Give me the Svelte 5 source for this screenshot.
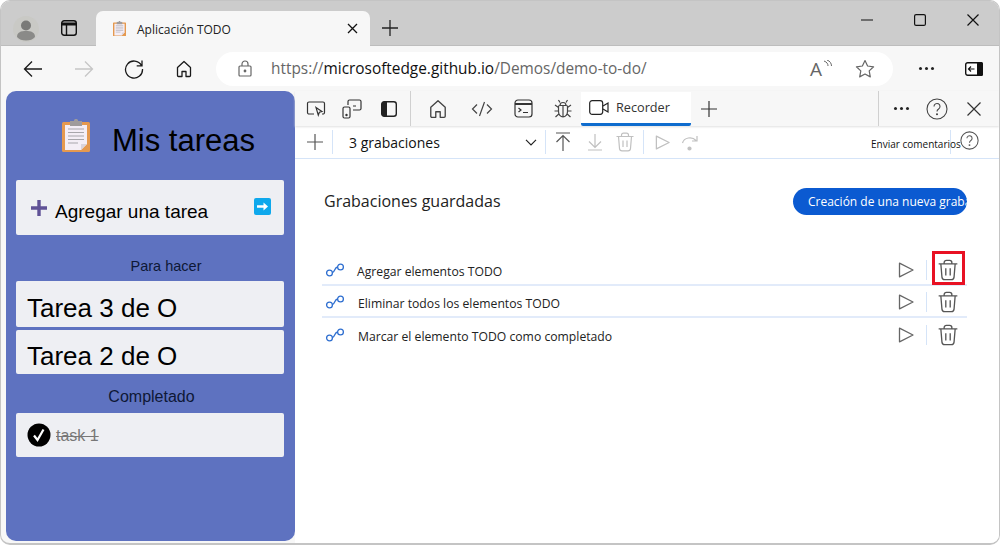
<script>
  let recordings = ["Agregar elementos TODO", "Eliminar todos los elementos TODO", "Marcar el elemento TODO como completado"];
</script>

{#snippet clipboard(w)}
  <svg width={w} viewBox="0 0 28 33" class="icon">
    <rect x="0" y="3" width="28" height="30" rx="1.5" fill="#e5994f"/>
    <path d="M3 6h22v19l-6 6H3z" fill="#f4eef6"/>
    <path d="M19 31l6-6h-6z" fill="#d9d3dc"/>
    <rect x="8" y="2" width="12" height="5" fill="#a09c9c"/>
    <rect x="12" y="0" width="4" height="3" rx="1.5" fill="#a09c9c"/>
    <path d="M6 10h16M6 13.500h16M6 17h16M6 20.500h16M6 24h10" stroke="#a8a6ab" stroke-width="1.200"/>
  </svg>
{/snippet}

{#snippet trash(color, w)}
  <svg width={w} height={w} viewBox="0 0 20 20" fill="none" stroke={color} stroke-width="1.200" class="icon">
    <path d="M1.500 4.500h17M6.500 4.500V3.200A2 2 0 0 1 8.500 1.200h3A2 2 0 0 1 13.500 3.200v1.300M3.500 4.500l1 12a2.500 2.500 0 0 0 2.500 2.300h6a2.500 2.500 0 0 0 2.500-2.300l1-12M8 8.500v6.500M12 8.500v6.500"/>
  </svg>
{/snippet}

{#snippet play(color, w)}
  <svg width={w} height={w} viewBox="0 0 18 18" fill="none" stroke={color} stroke-width="1.300" stroke-linejoin="round" class="icon">
    <path d="M2.500 2.200v13.600L16 9z"/>
  </svg>
{/snippet}

{#snippet flow()}
  <svg width="20" height="14" viewBox="0 0 20 14" fill="none" stroke="#2f6fd0" stroke-width="1.300" class="icon">
    <circle cx="4.500" cy="10" r="2.900"/><circle cx="15.500" cy="4" r="2.900"/>
    <path d="M7.500 9.500c2.500-.5 1.800-5 5-5.500"/>
  </svg>
{/snippet}

<div class="window">
  <div class="tabstrip">
    <div class="avatar">
      <svg width="26" height="26" viewBox="0 0 26 26" class="icon">
        <circle cx="13" cy="9.500" r="5" fill="#7a7a78"/>
        <path d="M4 21c0-5 4-6 9-6s9 1 9 6c-2 2.500-5 3.500-9 3.500S6 23.500 4 21z" fill="#8a8a88"/>
      </svg>
    </div>
    <svg width="18" height="18" viewBox="0 0 18 18" fill="none" stroke="#111" stroke-width="1.400" class="tabs-icon">
      <rect x="1.700" y="1.700" width="14.600" height="14.600" rx="2.500"/>
      <path d="M1.700 5h14.600" stroke-width="3"/><path d="M6.500 5v11"/>
    </svg>
    <div class="tab">
      {@render clipboard(13)}
      <span class="tab-title">Aplicación TODO</span>
      <svg width="11" height="11" viewBox="0 0 11 11" stroke="#111" stroke-width="1.300" class="tab-close">
        <path d="M1 1l9 9M10 1l-9 9"/>
      </svg>
    </div>
    <svg width="16" height="16" viewBox="0 0 16 16" stroke="#222" stroke-width="1.300" class="newtab">
      <path d="M8 0v16M0 8h16"/>
    </svg>
    <div class="winctl">
      <svg width="12" height="12" viewBox="0 0 12 12" stroke="#111" stroke-width="1.200"><path d="M0 6h12"/></svg>
      <svg width="12" height="12" viewBox="0 0 12 12" fill="none" stroke="#111" stroke-width="1.200"><rect x=".6" y=".6" width="10.800" height="10.800" rx="1.500"/></svg>
      <svg width="12" height="12" viewBox="0 0 12 12" stroke="#111" stroke-width="1.200"><path d="M.5.500l11 11M11.500.500l-11 11"/></svg>
    </div>
  </div>

  <div class="toolbar">
    <svg width="20" height="18" viewBox="0 0 20 18" fill="none" stroke="#1a1a1a" stroke-width="1.300" class="nav back"><path d="M19 9H1.500M9 1.500L1.500 9 9 16.500"/></svg>
    <svg width="20" height="18" viewBox="0 0 20 18" fill="none" stroke="#c6c6c6" stroke-width="1.300" class="nav fwd"><path d="M1 9h17.500M11 1.500L18.500 9 11 16.500"/></svg>
    <svg width="20" height="20" viewBox="0 0 20 20" fill="none" stroke="#1a1a1a" stroke-width="1.300" class="nav reload"><path d="M17.500 6.500A8.500 8.500 0 1 0 18.500 10M18 1.500v5.300h-5.300"/></svg>
    <svg width="18" height="18" viewBox="0 0 18 18" fill="none" stroke="#1a1a1a" stroke-width="1.300" stroke-linejoin="round" class="nav home"><path d="M7 16.500H3.500a1 1 0 0 1-1-1V7.500L9 1.500l6.500 6v8a1 1 0 0 1-1 1H11v-5H7z"/></svg>
    <div class="address">
      <svg width="14" height="17" viewBox="0 0 14 17" fill="none" stroke="#666" stroke-width="1.200" class="lock">
        <rect x="1" y="6" width="12" height="10" rx="1"/><path d="M4 6V4a3 3 0 0 1 6 0v2"/><circle cx="7" cy="11" r=".8" fill="#666"/>
      </svg>
      <span class="url"><span class="scheme">https://</span>microsoftedge.github.io<span class="scheme">/Demos/demo-to-do/</span></span>
      <span class="read">A<svg width="9" height="9" viewBox="0 0 9 9" fill="none" stroke="#666" class="waves"><path d="M1 1c3 1 4 3 4 5M4 0c3 1 4.500 3.500 4.500 6"/></svg></span>
      <svg width="20" height="19" viewBox="0 0 20 19" fill="none" stroke="#666" stroke-width="1.200" stroke-linejoin="round" class="star"><path d="M10 1.500l2.600 5.500 6 .8-4.400 4.100 1.100 6L10 15l-5.300 2.900 1.100-6L1.400 7.800l6-.8z"/></svg>
    </div>
    <div class="dots toolbar-dots"><i></i><i></i><i></i></div>
    <svg width="18" height="14" viewBox="0 0 18 14" class="icon">
      <rect x=".7" y=".7" width="16.600" height="12.600" rx="2" fill="#fff" stroke="#111" stroke-width="1.400"/>
      <rect x="12" y="0" width="6" height="14" rx="1.500" fill="#111"/>
      <path d="M9.500 7H3.500M6 4.500L3.500 7 6 9.500" fill="none" stroke="#111" stroke-width="1.200"/>
    </svg>
  </div>

  <div class="body">
    <aside class="todo">
      <header>
        {@render clipboard(28)}
        <h1>Mis tareas</h1>
      </header>
      <div class="card add">
        <svg width="16" height="16" viewBox="0 0 16 16" stroke="#5f5196" stroke-width="3.400" class="icon"><path d="M8 0v16M0 8h16"/></svg>
        <span>Agregar una tarea</span>
        <svg width="17" height="17" viewBox="0 0 17 17" class="go">
          <rect width="17" height="17" rx="2" fill="#0ea8ec"/>
          <path d="M3 8.500h8" stroke="#fff" stroke-width="2.400"/><path d="M9.500 4.500l4.500 4-4.500 4z" fill="#fff"/>
        </svg>
      </div>
      <h2 class="todo-head">Para hacer</h2>
      <div class="card big first">Tarea 3 de O</div>
      <div class="card big second">Tarea 2 de O</div>
      <h2 class="done-head">Completado</h2>
      <div class="card done">
        <svg width="24" height="24" viewBox="0 0 24 24" class="icon">
          <circle cx="12" cy="12" r="11.500" fill="#000"/>
          <path d="M7 12.500l3.500 4.500L16.500 6.500" fill="none" stroke="#fff" stroke-width="2.200"/>
        </svg>
        <s>task 1</s>
      </div>
    </aside>

    <section class="devtools">
      <div class="dt-tabs">
        <div class="tool-group">
          <svg width="20" height="18" viewBox="0 0 20 18" fill="none" stroke="#333" stroke-width="1.200" class="tb"><path d="M8 14H3a1.500 1.500 0 0 1-1.500-1.500v-9A1.500 1.500 0 0 1 3 2h14a1.500 1.500 0 0 1 1.500 1.500v9A1.500 1.500 0 0 1 17 14h-1"/><path d="M10 7.500l6 4-2.600.8-1.100 2.900z"/></svg>
          <svg width="20" height="20" viewBox="0 0 20 20" fill="none" stroke="#333" stroke-width="1.200" class="tb"><rect x="1" y="8" width="7" height="11" rx="1.500"/><path d="M6 6V2.500A1.500 1.500 0 0 1 7.500 1h10A1.500 1.500 0 0 1 19 2.500v7a1.500 1.500 0 0 1-1.500 1.500H11M11 7h3"/><circle cx="4.500" cy="16" r=".6"/></svg>
          <svg width="16" height="16" viewBox="0 0 16 16" class="tb">
            <rect x=".7" y=".7" width="14.600" height="14.600" rx="2.500" fill="none" stroke="#222" stroke-width="1.400"/>
            <path d="M3 .7h3v14.600H3a2.300 2.300 0 0 1-2.300-2.300V3A2.300 2.300 0 0 1 3 .7z" fill="#222"/>
          </svg>
        </div>
        <div class="vsep"></div>
        <div class="tool-group tabs2">
          <svg width="20" height="20" viewBox="0 0 18 18" fill="none" stroke="#444" stroke-width="1.200" stroke-linejoin="round" class="tb"><path d="M7 16.500H3.500a1 1 0 0 1-1-1V7.500L9 1.500l6.500 6v8a1 1 0 0 1-1 1H11v-5H7z"/></svg>
          <svg width="22" height="16" viewBox="0 0 22 16" fill="none" stroke="#444" stroke-width="1.200" class="tb code"><path d="M6 3.500L1.500 8 6 12.500M16 3.500L20.500 8 16 12.500M13.500 1L8.500 15"/></svg>
          <svg width="19" height="19" viewBox="0 0 19 19" fill="none" stroke="#333" stroke-width="1.200" class="tb pull"><rect x="1" y="1" width="17" height="17" rx="3"/><path d="M1 5h17" stroke-width="1.800"/><path d="M4.500 9l2.500 2-2.500 2M9 13.500h5"/></svg>
          <svg width="20" height="20" viewBox="0 0 20 20" fill="none" stroke="#444" stroke-width="1.200" class="tb pull"><path d="M6.500 6.500h7a1 1 0 0 1 1 1v5a4.500 5.500 0 0 1-9 0v-5a1 1 0 0 1 1-1zM7 6.500a3 3 0 0 1 6 0M10 6.500V18M5.500 8.500L2 6M14.500 8.500L18 6M5.500 12H1.500M14.500 12h4M5.800 15L2.500 18M14.200 15l3.300 3M7 3.500L5.500 1M13 3.500L14.500 1"/></svg>
        </div>
        <div class="rec-tab">
          <svg width="20" height="15" viewBox="0 0 20 15" fill="none" stroke="#222" stroke-width="1.200" class="icon"><rect x=".7" y=".7" width="13" height="13.600" rx="2.500"/><path d="M14 6l5-3v9l-5-3"/></svg>
          <span>Recorder</span>
        </div>
        <svg width="16" height="16" viewBox="0 0 16 16" stroke="#333" stroke-width="1.200" class="dt-plus"><path d="M8 0v16M0 8h16"/></svg>
        <div class="vsep end"></div>
        <div class="dots"><i></i><i></i><i></i></div>
        <svg width="22" height="22" viewBox="0 0 22 22" fill="none" stroke="#444" stroke-width="1.100" class="help"><circle cx="11" cy="11" r="10"/><path d="M8 8.500a3 3 0 1 1 4.600 2.500c-1.100.7-1.600 1.300-1.600 2.500"/><circle cx="11" cy="16.300" r=".5"/></svg>
        <svg width="14" height="14" viewBox="0 0 14 14" stroke="#333" stroke-width="1.200" class="dt-close"><path d="M.5.500l13 13M13.500.500l-13 13"/></svg>
      </div>

      <div class="dt-sub">
        <svg width="16" height="16" viewBox="0 0 16 16" stroke="#555" stroke-width="1.200" class="sub-plus"><path d="M8 0v16M0 8h16"/></svg>
        <div class="sep s1"></div>
        <span class="count">3 grabaciones</span>
        <svg width="12" height="7" viewBox="0 0 12 7" fill="none" stroke="#222" stroke-width="1.200" class="chev"><path d="M1 .8l5 5 5-5"/></svg>
        <div class="sep s2"></div>
        <svg width="16" height="20" viewBox="0 0 16 20" fill="none" stroke="#555" stroke-width="1.200" class="up"><path d="M1 1h14M8 19V3.500M1.500 10L8 3.500l6.500 6.500"/></svg>
        <svg width="16" height="18" viewBox="0 0 16 18" fill="none" stroke="#c0c0c0" stroke-width="1.200" class="down"><path d="M1 17h14M8 1v13M2 8.500l6 6 6-6"/></svg>
        <span class="sub-trash">{@render trash("#c0c0c0", 20)}</span>
        <div class="sep s3"></div>
        <span class="sub-play">{@render play("#c0c0c0", 17)}</span>
        <svg width="18" height="17" viewBox="0 0 18 17" fill="none" stroke="#c0c0c0" stroke-width="1.200" class="step"><path d="M1.500 9C3 3.500 11 2 15 6.500M16 2v5h-5"/><circle cx="8.500" cy="14.500" r="1.500" fill="#c0c0c0"/></svg>
        <span class="feedback">Enviar comentarios</span>
        <div class="sep s4"></div>
        <svg width="19" height="19" viewBox="0 0 22 22" fill="none" stroke="#555" stroke-width="1.200" class="sub-help"><circle cx="11" cy="11" r="10"/><path d="M8 8.500a3 3 0 1 1 4.600 2.500c-1.100.7-1.600 1.300-1.600 2.500"/><circle cx="11" cy="16.300" r=".5"/></svg>
      </div>

      <div class="saved">
        <div class="saved-head">
          <h3>Grabaciones guardadas</h3>
          <button>Creación de una nueva grabación</button>
        </div>
        <ul>
          {#each recordings as name, i}
            <li>
              {@render flow()}
              <span class="rec-name" class:tight={i == 0}>{name}</span>
              <span class="rec-play">{@render play("#666", 18)}</span>
              <div class="rec-sep"></div>
              <span class="rec-trash">{@render trash("#555", 22)}</span>
              {#if i == 0}<div class="highlight"></div>{/if}
            </li>
          {/each}
        </ul>
      </div>
    </section>
  </div>
</div>

<style>
  :global(body) {
    margin: 0;
    background: #fff;
  }
  .window {
    box-sizing: border-box;
    width: 1000px;
    height: 545px;
    border: 1px solid #c4c4c4;
    border-bottom-width: 2px;
    border-radius: 10px;
    overflow: hidden;
    background: #f7f7f7;
    font-family: "Open Sans", "Liberation Sans", sans-serif;
    color: #111;
    display: flex;
    flex-direction: column;
  }
  .icon { display: block; flex: none; }
  svg { display: block; flex: none; }

  .tabstrip {
    height: 45px;
    flex: none;
    background: #cccccc;
    display: flex;
    align-items: flex-end;
    box-sizing: border-box;
    border-bottom: 1px solid #bdbdbd;
  }
  .avatar {
    width: 26px;
    height: 26px;
    border-radius: 50%;
    background: #c9c9c5;
    margin: 0 0 3px 12px;
    overflow: hidden;
  }
  .tabs-icon { margin: 0 0 8px 21px; }
  .tab {
    width: 274px;
    height: 35px;
    margin: 0 0 -1px 18px;
    background: #f7f7f7;
    border-radius: 7px 7px 0 0;
    display: flex;
    align-items: center;
    padding-left: 17px;
    box-sizing: border-box;
  }
  .tab-title {
    font-size: 12px;
    margin-left: 11px;
    flex: 1;
    color: #222;
    position: relative;
    top: 1px;
  }
  .tab-close { margin-right: 12px; }
  .newtab { margin: 0 0 9px 12px; }
  .winctl {
    margin-left: auto;
    align-self: flex-start;
    display: flex;
    gap: 41px;
    padding: 13px 20px 0 0;
  }

  .toolbar {
    height: 45px;
    flex: none;
    display: flex;
    align-items: center;
    padding-left: 22px;
    box-sizing: border-box;
  }
  .fwd { margin-left: 31px; }
  .reload { margin-left: 30px; }
  .home { margin-left: 31px; }
  .address {
    width: 677px;
    height: 34px;
    margin-left: 23px;
    border-radius: 17px;
    background: #fff;
    display: flex;
    align-items: center;
    padding-left: 22px;
    box-sizing: border-box;
  }
  .url {
    font-size: 15.400px;
    margin-left: 19px;
    color: #111;
    flex: 1;
    white-space: nowrap;
  }
  .scheme { color: #666; }
  .read {
    position: relative;
    font-size: 19px;
    color: #666;
    width: 22px;
    line-height: 20px;
  }
  .waves { position: absolute; left: 13px; top: 1px; }
  .star { margin: 0 18px 0 23px; }
  .dots { display: flex; gap: 3px; }
  .dots i {
    width: 3px;
    height: 3px;
    border-radius: 50%;
    background: #222;
  }
  .toolbar-dots { margin: 0 31px 0 26px; }

  .body {
    flex: 1;
    display: flex;
    min-height: 0;
    padding-left: 5px;
  }
  .todo {
    width: 289px;
    flex: none;
    box-sizing: border-box;
    background: #5e72c0;
    border-radius: 10px;
    padding: 0 11px 0 10px;
    font-family: "Liberation Sans", Arial, sans-serif;
    color: #000;
    margin-bottom: 2px;
  }
  header {
    display: flex;
    align-items: center;
    height: 89px;
    padding-left: 46px;
    box-sizing: border-box;
  }
  h1 {
    font-size: 31px;
    font-weight: 400;
    margin: 0 0 0 22px;
    position: relative;
    top: 5px;
  }
  .card {
    background: #eeeff3;
    border-radius: 2px;
    box-sizing: border-box;
    display: flex;
    align-items: center;
  }
  .add {
    height: 55px;
    padding: 0 13px 0 15px;
    font-size: 19px;
  }
  .add span { margin-left: 8px; flex: 1; position: relative; top: 4px; }
  .go { margin-top: -2px; }
  h2 {
    font-weight: 400;
    margin: 0;
    text-align: center;
    color: #0e1836;
  }
  .todo-head {
    font-size: 14.500px;
    margin-top: 23px;
    padding-left: 32px;
    line-height: 17px;
  }
  .big {
    font-size: 26px;
    padding: 8px 0 0 11px;
  }
  .first { height: 46px; margin-top: 6px; }
  .second { height: 44px; margin-top: 3px; }
  .done-head {
    font-size: 16px;
    line-height: 19px;
    margin-top: 13px;
    padding-left: 3px;
  }
  .done {
    height: 44px;
    margin-top: 7px;
    padding-left: 11px;
    gap: 5px;
  }
  s { font-size: 16px; color: #777; position: relative; top: 1px; }

  .devtools {
    flex: 1;
    min-width: 0;
    background: #fff;
    display: flex;
    flex-direction: column;
  }
  .dt-tabs {
    height: 35px;
    flex: none;
    background: #f7f7f7;
    display: flex;
    align-items: center;
    box-shadow: 0 1px 2px #e0e0e0;
    position: relative;
  }
  .tool-group { display: flex; align-items: center; padding-left: 11px; gap: 16px; }
  .tool-group .tb:nth-child(3) { margin-left: 3px; }
  .vsep { width: 1px; height: 35px; background: #d0d0d0; margin-left: 13px; }
  .tabs2 { padding-left: 17px; gap: 21px; }
  .tabs2 .tb:nth-child(3) { margin-left: 0; }
  .tabs2 .code { margin-left: 2px; }
  .tabs2 .pull { margin-left: -1px; }
  .rec-tab {
    width: 110px;
    height: 34px;
    box-sizing: border-box;
    margin-left: 8px;
    background: #fff;
    border-bottom: 3px solid #0f6cce;
    border-radius: 0 0 2px 2px;
    display: flex;
    align-items: center;
    padding-left: 8px;
    gap: 7px;
    font-size: 12.700px;
    color: #333;
  }
  .dt-plus { margin-left: 10px; }
  .vsep.end { margin-left: 161px; }
  .dt-tabs .dots { margin-left: 15px; }
  .help { margin-left: 17px; }
  .dt-close { margin-left: 19px; }

  .dt-sub {
    height: 33px;
    flex: none;
    box-sizing: border-box;
    border-bottom: 1px solid #d5e4f8;
    display: flex;
    align-items: center;
    position: relative;
  }
  .sub-plus { margin-left: 12px; }
  .sep { width: 1px; height: 24px; background: #d5e4f8; flex: none; }
  .s1 { margin-left: 9px; }
  .count { font-size: 14px; margin-left: 16px; width: 176px; color: #111; }
  .chev { margin-left: 0; }
  .s2 { margin-left: 8px; }
  .up { margin-left: 9px; }
  .down { margin-left: 16px; }
  .sub-trash { margin-left: 12px; }
  .s3 { margin-left: 8px; }
  .sub-play { margin-left: 10px; }
  .step { margin-left: 10px; }
  .feedback { font-size: 10px; margin-left: 172px; width: 79px; white-space: nowrap; color: #111; position: relative; top: 2px; }
  .s4 { margin-left: 0; }
  .sub-help { margin-left: 9px; margin-top: -4px; }

  .saved { padding: 0 32px 0 27px; }
  .saved-head {
    display: flex;
    align-items: center;
    justify-content: space-between;
    height: 54px;
    margin-top: 15px;
    padding-left: 2px;
  }
  h3 { font-size: 16px; font-weight: 400; margin: 0; color: #222; }
  button {
    width: 174px;
    height: 27px;
    border: 0;
    border-radius: 14px;
    background: #0b5ad1;
    color: #fff;
    font: 12px "Open Sans", sans-serif;
    white-space: nowrap;
    overflow: hidden;
    text-align: left;
    padding: 0 0 0 15px;
  }
  ul { list-style: none; margin: 26px 0 0; padding: 0; }
  li {
    height: 32px;
    box-sizing: border-box;
    border-bottom: 2px solid #e2ebfa;
    display: flex;
    align-items: center;
    padding: 2px 0 0 3px;
    position: relative;
    font-size: 12.200px;
  }
  li:last-child { border-bottom: 0; }
  .rec-name { margin-left: 13px; flex: 1; color: #222; position: relative; top: 1px; }
  .rec-name.tight { margin-left: 12px; }
  .rec-sep { width: 1px; height: 20px; background: #d5e4f8; margin: 0 10px 0 11px; }
  .rec-trash { margin-right: 8px; }
  .highlight {
    position: absolute;
    right: 2px;
    top: -3px;
    width: 33px;
    height: 34px;
    box-sizing: border-box;
    border: 3px solid #e81123;
  }
</style>
